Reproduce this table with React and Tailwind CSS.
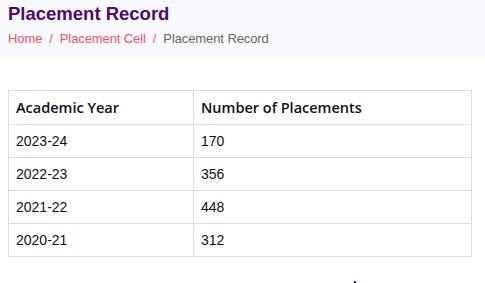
import React from 'react';

const rows = [
  ['2023-24', '170'],
  ['2022-23', '356'],
  ['2021-22', '448'],
  ['2020-21', '312'],
];

export default function App() {
  return (
    <div className="min-h-[283px] bg-white font-['Liberation_Sans',Arial,sans-serif]">
      <div className="bg-[#f8f9fd] px-2 pt-[3px] h-[58px]">
        <h1 className="text-[18.5px] leading-[22px] font-bold text-[#4b0a6e]">Placement Record</h1>
        <div className="mt-[5px] text-[13px] leading-[18px] text-[#f5506a] tracking-[-0.1px]">
          <span>Home</span>
          <span className="px-[7px]">/</span>
          <span>Placement Cell</span>
          <span className="px-[7px]">/</span>
          <span className="text-[#666]">Placement Record</span>
        </div>
      </div>
      <div className="px-2 pt-8">
        <table className="w-[464px] border-collapse border border-[#dcdcdc]">
          <thead>
            <tr className="h-[34px]">
              <th className="w-[185px] border border-[#dcdcdc] px-[7px] text-left text-[14.5px] font-semibold text-[#111] font-['Open_Sans',sans-serif]">Academic Year</th>
              <th className="border border-[#dcdcdc] px-[7px] text-left text-[14.5px] font-semibold text-[#111] font-['Open_Sans',sans-serif]">Number of Placements</th>
            </tr>
          </thead>
          <tbody>
            {rows.map(([year, count]) => (
              <tr key={year} className="h-[33px]">
                <td className="border border-[#dcdcdc] px-[7px] text-[14px] text-[#111]">{year}</td>
                <td className="border border-[#dcdcdc] px-[7px] text-[14px] text-[#111]">{count}</td>
              </tr>
            ))}
          </tbody>
        </table>
      </div>
      <div className="relative">
        <span className="absolute left-[354px] top-[24px] w-[2px] h-[2px] bg-[#2020e0]" />
      </div>
    </div>
  );
}
